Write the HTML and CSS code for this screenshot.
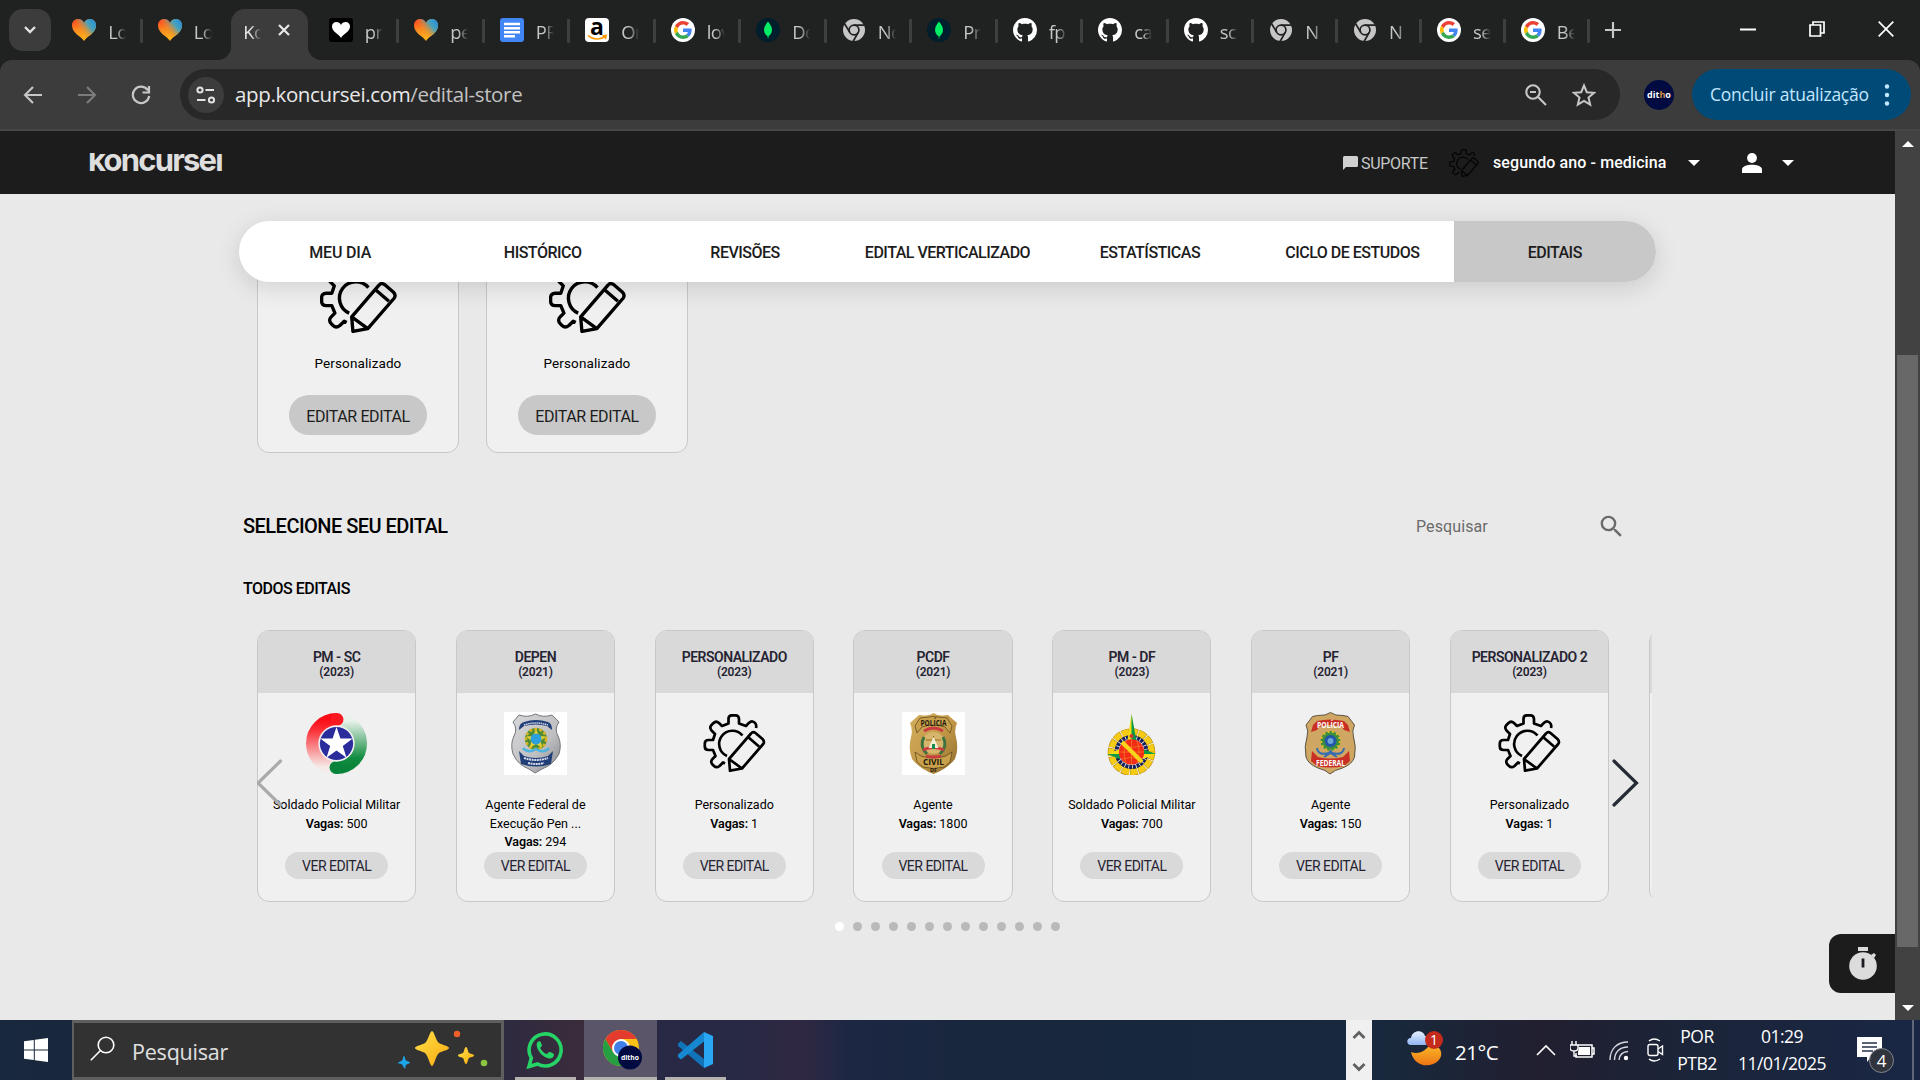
FILE: index.html
```html
<!DOCTYPE html>
<html lang="pt-BR">
<head>
<meta charset="utf-8">
<title>Koncursei</title>
<link rel="stylesheet" href="styles.css">
</head>
<body>
<svg class="defs" width="0" height="0" aria-hidden="true">
  <defs>
    <linearGradient id="heartWarm" x1="0" y1="0" x2="0.3" y2="1"><stop offset="0" stop-color="#ff3b1f"/><stop offset=".5" stop-color="#f98a20"/><stop offset="1" stop-color="#fbb41c"/></linearGradient>
    <linearGradient id="heartCool" x1="1" y1="0.1" x2="0.35" y2="0.55"><stop offset="0" stop-color="#1a8fe0"/><stop offset=".45" stop-color="#4fa3b5"/><stop offset="1" stop-color="#f98a20" stop-opacity="0"/></linearGradient>
    <linearGradient id="redFade" x1="0" y1="0" x2="0" y2="1"><stop offset="0" stop-color="#fb0d17"/><stop offset=".2" stop-color="#fb2a32"/><stop offset="1" stop-color="#f6e9e6"/></linearGradient>
    <linearGradient id="greenFade" x1="0" y1="0" x2="0" y2="1"><stop offset="0" stop-color="#eaf2ec"/><stop offset=".8" stop-color="#128c40"/><stop offset="1" stop-color="#08843a"/></linearGradient>
    <linearGradient id="silver" x1="0" y1="0" x2="1" y2="1"><stop offset="0" stop-color="#d8d8da"/><stop offset=".6" stop-color="#bfbfc2"/><stop offset="1" stop-color="#85868b"/></linearGradient>
    <linearGradient id="gold" x1="0" y1="0" x2="1" y2="1"><stop offset="0" stop-color="#d3ae60"/><stop offset=".5" stop-color="#c49a49"/><stop offset="1" stop-color="#8f6b2c"/></linearGradient>
    <linearGradient id="spark" x1="0" y1="0" x2="1" y2="1"><stop offset="0" stop-color="#ffe04a"/><stop offset="1" stop-color="#f9ab0e"/></linearGradient>
    <linearGradient id="moon" x1="0" y1="0" x2="0" y2="1"><stop offset="0" stop-color="#fbc02d"/><stop offset="1" stop-color="#ee7413"/></linearGradient>
    <linearGradient id="cloud" x1="0" y1="0" x2="0" y2="1"><stop offset="0" stop-color="#e8f1ff"/><stop offset="1" stop-color="#8eb5f2"/></linearGradient>

    <symbol id="heart" viewBox="0 0 24 24"><path d="M12 23C9 18 0 15.500 0 7.500 0 3.200 2.800 1 6 1c2.800 0 5 1.500 6 4 1-2.500 3.200-4 6-4 3.200 0 6 2.200 6 6.500 0 8-9 10.500-12 15.500z" fill="url(#heartWarm)"/><path d="M12 23C9 18 0 15.500 0 7.500 0 3.200 2.800 1 6 1c2.800 0 5 1.500 6 4 1-2.500 3.200-4 6-4 3.200 0 6 2.200 6 6.500 0 8-9 10.500-12 15.500z" fill="url(#heartCool)"/></symbol>
    <symbol id="heart-bw" viewBox="0 0 24 24"><rect width="24" height="24" rx="3" fill="#000"/><path d="M12 20C10 16 3 14 3 8.500 3 5.500 5 4 7.300 4 9.500 4 11.300 5 12 7c.7-2 2.500-3 4.700-3C19 4 21 5.500 21 8.500 21 14 14 16 12 20z" fill="#fff"/></symbol>
    <symbol id="docs" viewBox="0 0 24 24"><rect width="24" height="24" rx="3" fill="#4285f4"/><path d="M4 6h16M4 10.300h16M4 14.300h16M4 18.200h11" stroke="#fff" stroke-width="2.400"/></symbol>
    <symbol id="amazon" viewBox="0 0 24 24"><rect width="24" height="24" rx="4" fill="#fff"/><text x="12" y="16.500" text-anchor="middle" font-family="Open Sans, sans-serif" font-weight="700" font-size="23" fill="#000">a</text><path d="M3 17.500c5 4.500 12.500 4.500 17 1M17.500 17.800l3.600-.3-.7 3.500" fill="none" stroke="#ff9900" stroke-width="1.600"/></symbol>
    <symbol id="google" viewBox="0 0 24 24"><circle cx="12" cy="12" r="12" fill="#fff"/><g transform="translate(3 3) scale(.375)"><path fill="#EA4335" d="M24 9.500c3.540 0 6.710 1.220 9.210 3.600l6.850-6.850C35.900 2.380 30.470 0 24 0 14.620 0 6.510 5.380 2.560 13.220l7.980 6.190C12.430 13.720 17.740 9.500 24 9.500z"/><path fill="#4285F4" d="M46.980 24.550c0-1.570-.15-3.090-.38-4.550H24v9.020h12.940c-.58 2.960-2.260 5.480-4.780 7.180l7.730 6c4.510-4.180 7.090-10.360 7.090-17.650z"/><path fill="#FBBC05" d="M10.530 28.590c-.48-1.450-.76-2.990-.76-4.590s.27-3.140.76-4.590l-7.980-6.190C.92 16.460 0 20.120 0 24c0 3.880.92 7.540 2.560 10.780l7.970-6.190z"/><path fill="#34A853" d="M24 48c6.480 0 11.930-2.130 15.890-5.810l-7.730-6c-2.150 1.450-4.920 2.300-8.160 2.300-6.260 0-11.570-4.220-13.470-9.910l-7.980 6.190C6.510 42.620 14.620 48 24 48z"/></g></symbol>
    <symbol id="mongo" viewBox="0 0 24 24"><circle cx="12" cy="12" r="12" fill="#001e2b"/><path d="M12 3.500c-2 2.500-4 5-4 8.500 0 3 1.800 5 3.600 6.300l.2 2.200h.5l.2-2.200c1.800-1.300 3.500-3.300 3.500-6.300 0-3.500-2-6-4-8.500z" fill="#00ed64"/></symbol>
    <symbol id="chrome-mono" viewBox="0 0 24 24"><circle cx="12" cy="12" r="11" fill="#c6c6c6"/><circle cx="12" cy="12" r="4.900" fill="#c6c6c6" stroke="#202221" stroke-width="1.700"/><path d="M12 7.100h10.500M7.800 14.400 2.600 5.800M16.200 14.400 11.100 23.500" stroke="#202221" stroke-width="1.700"/></symbol>
    <symbol id="github" viewBox="0 0 16 16"><path fill="#fff" d="M8 0C3.580 0 0 3.580 0 8c0 3.540 2.290 6.530 5.470 7.590.4.070.55-.17.55-.38 0-.19-.01-.82-.01-1.490-2.010.37-2.530-.49-2.690-.94-.09-.23-.48-.94-.82-1.130-.28-.15-.68-.52-.01-.53.63-.01 1.080.58 1.230.82.72 1.210 1.870.87 2.330.66.070-.52.28-.87.51-1.070-1.780-.2-3.640-.89-3.640-3.950 0-.87.31-1.590.82-2.150-.08-.2-.36-1.020.08-2.120 0 0 .67-.21 2.200.82.64-.18 1.320-.27 2-.27s1.360.09 2 .27c1.530-1.040 2.200-.82 2.200-.82.44 1.100.16 1.920.08 2.120.51.56.82 1.270.82 2.150 0 3.070-1.870 3.750-3.650 3.950.29.25.54.73.54 1.480 0 1.070-.01 1.930-.01 2.200 0 .21.15.46.55.38A8.010 8.010 0 0 0 16 8c0-4.420-3.580-8-8-8z"/></symbol>
    <symbol id="gear" viewBox="0 0 62 58"><g fill="none" stroke="currentColor" stroke-width="2.700" stroke-linejoin="round"><path d="M52.500 14c1-3.500-1-6-3.500-6.500-2-.4-3.500 1-6.500 4.500l-7-2.500V5c0-2.500-1.500-3.700-3.500-3.700h-3.500c-2 0-3.500 1.200-3.500 3.700v4.500l-6.500 2.500-3-3c-2-1.700-4-1.500-5.500 0l-2 2c-1.500 1.600-1.500 3.600 0 5.500l3.500 3.500-2 6H5c-2.500 0-3.700 1.500-3.700 3.500v3c0 2 1.200 3.500 3.700 3.500h4.500l2.500 6-3 3c-1.800 1.800-1.500 4 0 5.500l1.500 1.500c1.600 1.500 3.600 1.500 5.500 0l3.500-3.500 2 1"/><path d="M39 21.500A13.200 13.200 0 1 0 23.500 42"/><path d="M25.500 45 47.500 19.500q2-2.500 4.500-.5l7 6q2.500 2.500.7 5L38.500 54.500 26.500 56.700ZM44.500 23l11 9.500M25.500 45l13 9.500"/></g></symbol>
    <symbol id="search" viewBox="0 0 24 24"><path fill="currentColor" d="M15.500 14h-.79l-.28-.27A6.470 6.470 0 0 0 16 9.500 6.500 6.500 0 1 0 9.500 16c1.610 0 3.090-.59 4.230-1.570l.27.28v.79l5 4.990L20.490 19l-4.990-5zm-6 0C7.010 14 5 11.990 5 9.500S7.010 5 9.500 5 14 7.010 14 9.500 11.990 14 9.500 14z"/></symbol>
  </defs>
</svg>

<header class="tabstrip">
  <div class="tab-search"><svg width="14" height="10" viewBox="0 0 14 10"><path d="M2 2l5 5 5-5" fill="none" stroke="#e3e3e3" stroke-width="2.400"/></svg></div>
  <div class="tabs">
    <div class="tab"><svg class="fav"><use href="#heart"/></svg><span>Lo</span></div>
    <div class="tab nosep"><svg class="fav"><use href="#heart"/></svg><span>Lo</span></div>
    <div class="tab active"><span>Ko</span><svg width="14" height="14" viewBox="0 0 14 14"><path d="M2 2l10 10M12 2 2 12" stroke="#e8e8e8" stroke-width="2.200"/></svg></div>
    <div class="tab"><svg class="fav"><use href="#heart-bw"/></svg><span>pr</span></div>
    <div class="tab"><svg class="fav"><use href="#heart"/></svg><span>pe</span></div>
    <div class="tab"><svg class="fav"><use href="#docs"/></svg><span>PR</span></div>
    <div class="tab"><svg class="fav"><use href="#amazon"/></svg><span>On</span></div>
    <div class="tab"><svg class="fav"><use href="#google"/></svg><span>lov</span></div>
    <div class="tab"><svg class="fav"><use href="#mongo"/></svg><span>Do</span></div>
    <div class="tab"><svg class="fav"><use href="#chrome-mono"/></svg><span>No</span></div>
    <div class="tab"><svg class="fav"><use href="#mongo"/></svg><span>Pr</span></div>
    <div class="tab"><svg class="fav"><use href="#github"/></svg><span>fp</span></div>
    <div class="tab"><svg class="fav"><use href="#github"/></svg><span>ca</span></div>
    <div class="tab"><svg class="fav"><use href="#github"/></svg><span>sc</span></div>
    <div class="tab slim"><svg class="fav"><use href="#chrome-mono"/></svg><span>N</span></div>
    <div class="tab slim"><svg class="fav"><use href="#chrome-mono"/></svg><span>N</span></div>
    <div class="tab slim"><svg class="fav"><use href="#google"/></svg><span>se</span></div>
    <div class="tab slim"><svg class="fav"><use href="#google"/></svg><span>Be</span></div>
  </div>
  <svg class="new-tab" width="16" height="16" viewBox="0 0 16 16"><path d="M8 0v16M0 8h16" stroke="#c7c7c7" stroke-width="2.200"/></svg>
  <div class="window-controls">
    <svg width="16" height="16" viewBox="0 0 16 16"><path d="M0 8.500h16" stroke="#fff" stroke-width="2"/></svg>
    <svg width="16" height="16" viewBox="0 0 16 16"><path d="M1 4h10.500v11H1zM4 4V1h11v11h-3.500" fill="none" stroke="#fff" stroke-width="1.700"/></svg>
    <svg width="16" height="16" viewBox="0 0 16 16"><path d="M.7.700l14.600 14.600M15.300.700.700 15.300" stroke="#fff" stroke-width="1.700"/></svg>
  </div>
</header>

<div class="toolbar">
  <div class="nav-buttons">
    <svg width="20" height="20" viewBox="0 0 20 20"><path d="M19 10H2M10 2l-8 8 8 8" fill="none" stroke="#c7c7c7" stroke-width="2.100"/></svg>
    <svg width="20" height="20" viewBox="0 0 20 20"><path d="M1 10h17M10 2l8 8-8 8" fill="none" stroke="#7c7c7c" stroke-width="2.100"/></svg>
    <svg width="20" height="20" viewBox="0 0 20 20"><path d="M17 5.500A8.200 8.200 0 1 0 18.200 11M18 1v6.500h-6.500" fill="none" stroke="#c7c7c7" stroke-width="2.200"/></svg>
  </div>
  <div class="omnibox">
    <div class="site-info"><svg width="20" height="20" viewBox="0 0 20 20"><g fill="none" stroke="#e3e3e3" stroke-width="2"><circle cx="4" cy="5" r="2.600"/><path d="M9.500 5H18M1 15h8.500"/><circle cx="15.500" cy="15" r="2.600"/></g></svg></div>
    <div class="url">app.koncursei.com<span>/edital-store</span></div>
    <svg width="22" height="22" viewBox="0 0 22 22"><g fill="none" stroke="#c7c7c7" stroke-width="2.100"><circle cx="8" cy="8" r="6.700"/><path d="M12.800 12.800 21 21M5 8h6"/></g></svg>
    <svg class="star" width="24" height="24" viewBox="0 0 24 24"><path d="M12 2.500l2.800 6.700 7.200.6-5.500 4.700 1.700 7.100L12 17.800l-6.200 3.800 1.700-7.100L2 9.800l7.200-.6z" fill="none" stroke="#c7c7c7" stroke-width="2"/></svg>
  </div>
  <div class="avatar">dit<i>h</i>o</div>
  <div class="update"><span>Concluir atualização</span><svg width="6" height="22" viewBox="0 0 6 22"><g fill="#c2e7ff"><circle cx="3" cy="2.500" r="2.200"/><circle cx="3" cy="11" r="2.200"/><circle cx="3" cy="19.500" r="2.200"/></g></svg></div>
</div>

<div class="viewport">
  <div class="page">
    <div class="appbar">
      <div class="logo"><span>koncursei</span></div>
      <div class="support"><svg width="15" height="14" viewBox="0 0 15 14"><path d="M1.500 0h12Q15 0 15 1.500v8Q15 11 13.500 11H3l-3 3V1.500Q0 0 1.500 0z" fill="#d0d0d0"/></svg><span>SUPORTE</span></div>
      <svg class="plan-icon" width="30" height="28"><use href="#gear"/></svg>
      <div class="plan">segundo ano - medicina</div>
      <i class="caret"></i>
      <svg class="user" width="20" height="20" viewBox="0 0 20 20"><circle cx="10" cy="5" r="4.900" fill="#fff"/><path d="M0 20v-3.500C0 13 6 11.800 10 11.800S20 13 20 16.500V20z" fill="#fff"/></svg>
      <i class="caret"></i>
    </div>

    <nav class="menu">
      <a>MEU DIA</a><a>HISTÓRICO</a><a>REVISÕES</a><a>EDITAL VERTICALIZADO</a><a>ESTATÍSTICAS</a><a>CICLO DE ESTUDOS</a><a class="on">EDITAIS</a>
    </nav>

    <main>
      <section class="mine">
        <article><svg width="77" height="72"><use href="#gear"/></svg><p>Personalizado</p><button>EDITAR EDITAL</button></article>
        <article><svg width="77" height="72"><use href="#gear"/></svg><p>Personalizado</p><button>EDITAR EDITAL</button></article>
      </section>

      <div class="heading">
        <h1>SELECIONE SEU EDITAL</h1>
        <div class="search"><span>Pesquisar</span><svg width="29" height="29"><use href="#search"/></svg></div>
      </div>
      <h2>TODOS EDITAIS</h2>

      <section class="carousel">
        <article>
          <header><b>PM - SC</b><small>(2023)</small></header>
          <svg class="badge" viewBox="0 0 63 63"><path d="M32 7.500A24 24 0 0 0 7.500 31.500A24 24 0 0 0 25 54.600" fill="none" stroke="url(#redFade)" stroke-width="13"/><path d="M31 55.500A24 24 0 0 0 55.500 31.500A24 24 0 0 0 38 8.400" fill="none" stroke="url(#greenFade)" stroke-width="13"/><circle cx="32" cy="7.500" r="6.500" fill="#fb1820"/><circle cx="31" cy="55.500" r="6.500" fill="#08843a"/><circle cx="31.500" cy="31.500" r="18.200" fill="#f0f0f0"/><circle cx="31.500" cy="31.500" r="16.600" fill="#2b2c9c"/><path d="M31.500 15l3.900 11.600h12.300l-9.900 7.300 3.700 11.800-10-7.200-10 7.200 3.700-11.800-9.900-7.300h12.300z" fill="#fff"/></svg>
          <div class="info">Soldado Policial Militar<br><b>Vagas:</b> 500</div><button>VER EDITAL</button>
        </article>
        <article>
          <header><b>DEPEN</b><small>(2021)</small></header>
          <svg class="badge" viewBox="0 0 63 63"><rect width="63" height="63" fill="#fff"/><path d="M15 3Q24 6 31.500 2 39 6 48 3l7 7q-5 7-1 14 4 8 1 18-6 11-17 15l-7 4-6-4Q14 53 9 42q-3-10 1-18 4-7-1-14z" fill="url(#silver)" stroke="#74757a"/><path d="M15 18q0-7 5-8 12-4 24 0 4 1 4 8l-5-4q-11-3-23 0z" fill="#213e79"/><path d="M20 13q12-4 24 0" fill="none" stroke="#cfd6e6" stroke-width="1.500" stroke-dasharray="1.500 .6"/><circle cx="32" cy="27" r="11" fill="#4d8b35"/><circle cx="32" cy="27" r="10" fill="none" stroke="#d8b322" stroke-width="2.500" stroke-dasharray="3 2"/><path d="M32 17l3 7 7 .5-5.500 4.500 2 7-6.500-4-6.500 4 2-7-5.500-4.500 7-.5z" fill="#e9cf30"/><circle cx="32" cy="27" r="5.500" fill="#2c9fdd"/><path d="M19 36q5 6 13 1 8 5 13-1" fill="none" stroke="#4eb4de" stroke-width="2.500"/><path d="M15 39l5 5q12 4 24 0l5-5-2 13q-15 5-30 0z" fill="#213e79"/><path d="M20 46q12 4 24 0M24 51q8 2 16 0" fill="none" stroke="#d5dceb" stroke-width="2" stroke-dasharray="2 .6"/></svg>
          <div class="info">Agente Federal de<br>Execução Pen ...<br><b>Vagas:</b> 294</div><button>VER EDITAL</button>
        </article>
        <article>
          <header><b>PERSONALIZADO</b><small>(2023)</small></header>
          <svg class="badge gear"><use href="#gear"/></svg>
          <div class="info">Personalizado<br><b>Vagas:</b> 1</div><button>VER EDITAL</button>
        </article>
        <article>
          <header><b>PCDF</b><small>(2021)</small></header>
          <svg class="badge" viewBox="0 0 63 63"><rect width="63" height="63" fill="#fff"/><path d="M31.500 1Q36 4 41 3.500L46 3 55 11q-3 7-1 14 3 12-1 22-8 10-21.500 15Q18 57 10 47q-4-10-1-22 2-7-1-14l9-8 5 .5Q27 4 31.500 1z" fill="url(#gold)"/><path d="M13 14l5-8q13-3 27 0l5 8-2 7-5-6q-12-4-23 0l-5 6zM13 40l6 4q12 4 25 0l6-4-2 10-6 5q-11 3-21 0l-6-5z" fill="#c9a14c" stroke="#564118" stroke-width=".7"/><text x="31.500" y="13.500" text-anchor="middle" textLength="26" lengthAdjust="spacingAndGlyphs" class="crest dark">POLÍCIA</text><circle cx="31.500" cy="31" r="11" fill="#d5b66c"/><path d="M22 25q-5 9 3 17M41 25q5 9-3 17" fill="none" stroke="#3e7240" stroke-width="3"/><path d="M22 19q9.500-6 19 0M21 38q10-5 21 0M24 44q8 2 15 0" fill="none" stroke="#cc3b40" stroke-width="2.800"/><path d="M24 28h15M31.500 24v12" stroke="#99681e"/><path d="M31.500 25l5 11h-10z" fill="#f0eed6"/><path d="M30 32h3v5h-3z" fill="#168b4a"/><text x="31.500" y="53" text-anchor="middle" textLength="21" lengthAdjust="spacingAndGlyphs" class="crest dark">CIVIL</text><text x="31.500" y="59.500" text-anchor="middle" class="crest dark tiny">DF</text></svg>
          <div class="info">Agente<br><b>Vagas:</b> 1800</div><button>VER EDITAL</button>
        </article>
        <article>
          <header><b>PM - DF</b><small>(2023)</small></header>
          <svg class="badge" viewBox="0 0 63 63"><circle cx="31.500" cy="40" r="20" fill="none" stroke="#b98d17" stroke-width="7.500" stroke-dasharray="7.500 .9"/><circle cx="31.500" cy="40" r="20" fill="none" stroke="#f6cb13" stroke-width="6.200" stroke-dasharray="7 1.400"/><circle cx="31.500" cy="40" r="16" fill="#f0f0f0"/><circle cx="31.500" cy="40" r="15" fill="none" stroke="#16235f" stroke-width="4" stroke-dasharray="3 .8"/><path d="M31.500 2l4 26h-8z" fill="#f5dd16"/><path d="M31.500 2l5 27h-5z" fill="#0b9b46"/><path d="M7 42l13-5 1 5z" fill="#f5dd16"/><path d="M7 42h14l-1 5z" fill="#0b9b46"/><path d="M56 42l-13-5-1 5z" fill="#0b9b46"/><path d="M56 42H42l1 5z" fill="#f5dd16"/><circle cx="31.500" cy="40" r="12.700" fill="#f32c17"/><path d="M19 40h25M31.500 28v25M22 34q9 3 19 0M22 47q9-3 19 0M26 29q-4 11 0 22M37 29q4 11 0 22" fill="none" stroke="#f2a32a" stroke-width=".5"/><path d="M22 30l20 20" stroke="#f8d51a" stroke-width="4"/><circle cx="31.500" cy="24" r="2" fill="#d9352a"/></svg>
          <div class="info">Soldado Policial Militar<br><b>Vagas:</b> 700</div><button>VER EDITAL</button>
        </article>
        <article>
          <header><b>PF</b><small>(2021)</small></header>
          <svg class="badge" viewBox="0 0 63 63"><path d="M31.500.500Q36 4 44 3.500l5 1 6.500 8.500q-3 6-1 12 3 9 1 20-2 7-12 11-8 2-12.500 6Q27 58 19 56 9 52 7 45q-2-11 1-20 2-6-1-12L13.500 4.500l5-1Q27 4 31.500.500z" fill="#cfa662" stroke="#5b5344"/><path d="M12 20l2-7 4-4q13-3 27 0l4 4 2 7-6-2-2-3q-12-4-23 0l-2 3z" fill="#c92f24"/><text x="31.500" y="15.500" text-anchor="middle" textLength="27" lengthAdjust="spacingAndGlyphs" class="crest light">POLÍCIA</text><circle cx="31.500" cy="29" r="10" fill="#3a8e3e"/><circle cx="31.500" cy="29" r="9.300" fill="none" stroke="#e1bd25" stroke-width="2" stroke-dasharray="2 2.500"/><circle cx="31.500" cy="29" r="6" fill="#2356a8"/><circle cx="31.500" cy="29" r="3" fill="#6ca5d8"/><path d="M18 36q1 8 12 5l1.500-2 1.500 2q11 3 12-5M25 45l6.500-4 6.500 4" fill="none" stroke="#356db1" stroke-width="2"/><path d="M13 39l6 6q12 3 25 0l6-6 1 10-6 5q-14 3-27 0l-6-5z" fill="#c92f24"/><text x="31.500" y="54" text-anchor="middle" textLength="29" lengthAdjust="spacingAndGlyphs" class="crest light">FEDERAL</text></svg>
          <div class="info">Agente<br><b>Vagas:</b> 150</div><button>VER EDITAL</button>
        </article>
        <article>
          <header><b>PERSONALIZADO 2</b><small>(2023)</small></header>
          <svg class="badge gear"><use href="#gear"/></svg>
          <div class="info">Personalizado<br><b>Vagas:</b> 1</div><button>VER EDITAL</button>
        </article>
        <article><header></header></article>
        <svg class="arrow prev" width="28" height="50" viewBox="0 0 28 50"><path d="M24.500 3 2 25 24.500 47" fill="none" stroke="#a9aaab" stroke-width="3.200" stroke-linecap="round"/></svg>
        <svg class="arrow next" width="28" height="50" viewBox="0 0 28 50"><path d="M3 3l22.500 22L3 47" fill="none" stroke="#262b33" stroke-width="3.200" stroke-linecap="round"/></svg>
      </section>
      <div class="dots"><i class="on"></i><i></i><i></i><i></i><i></i><i></i><i></i><i></i><i></i><i></i><i></i><i></i><i></i></div>
    </main>
    <div class="timer"><svg width="30" height="34" viewBox="0 0 30 34"><path d="M10 0h10v4H10z" fill="#dcdcdc"/><circle cx="15" cy="19" r="13.800" fill="#dcdcdc"/><path d="M23 8l3-2 2 2-2 3z" fill="#dcdcdc"/><path d="M15 11.500v9" stroke="#1b1b24" stroke-width="2.800"/></svg></div>
  </div>
  <div class="scrollbar"><i class="up"></i><div class="thumb"></div><i class="down"></i></div>
</div>

<footer class="taskbar">
  <div class="start"><svg width="24" height="24" viewBox="0 0 24 24"><path d="M0 3.300 9.800 2v9.400H0zM10.800 1.800 24 0v11.400H10.800zM0 12.500h9.800V22L0 20.700zM10.800 12.500H24V24l-13.200-1.800z" fill="#fff"/></svg></div>
  <div class="task-search">
    <svg width="25" height="25" viewBox="0 0 25 25"><g fill="none" stroke="#fff" stroke-width="1.600"><circle cx="16" cy="9" r="7.800"/><path d="M10.500 14.500.800 24.200"/></g></svg>
    <span>Pesquisar</span>
    <svg class="sparkles" width="94" height="40" viewBox="0 0 94 40"><path d="M36 2c2 0 4 10 7 12s10 3 10 5-7 3-10 5-5 13-7 13-4-11-7-13-10-3-10-5 7-3 10-5 5-12 7-12z" fill="url(#spark)"/><path d="M70 18c1.500 0 2 5 3 6s5 1 5 2.500-4 1.500-5 2.500-1.500 6-3 6-2-5-3-6-5-1-5-2.500 4-1.500 5-2.500 1.500-6 3-6z" fill="url(#spark)"/><path d="M8 27c1 0 1 3.500 2 4.500s4 1 4 2-3 1.500-4 2.500 0 3.500-1 3.500-2-3-3-4-4-.5-4-1.500 3-1.500 4-2.500 1-4.500 2-4.500z" fill="#1ba5e8"/><circle cx="61" cy="5" r="3.200" fill="#f1602b"/><circle cx="88" cy="34" r="3.300" fill="#8cc63e"/></svg>
  </div>
  <div class="app wa"><svg width="38" height="38" viewBox="0 0 38 38"><path d="M3 35.500l2.300-8.500A16 16 0 1 1 11.500 33z" fill="none" stroke="#25d366" stroke-width="3.600"/><path d="M13 10c-2 1-3 3-2 6 2 6 6 10 12 11.500 2.500.5 5-1 5-4 0-1-4-3-5-2.500s-1.500 2.200-2.500 2C17.500 22 15 19 14.300 17.300c-.3-.9 1.600-1.800 1.700-2.800S14.500 9.800 13 10z" fill="#25d366"/></svg></div>
  <div class="app ch"><svg width="42" height="42" viewBox="0 0 42 42"><circle cx="19" cy="19" r="18" fill="#fbc116"/><path d="M3.400 10A18 18 0 0 1 34.600 10H19L11.500 24z" fill="#e33b2e"/><path d="M3.400 10A18 18 0 0 0 19 37l7.800-13.500-15.300.5z" fill="#269f42"/><circle cx="19" cy="19" r="9" fill="#fff"/><circle cx="19" cy="19" r="7" fill="#3f7fe8"/><circle cx="28" cy="28.500" r="12" fill="#020a42"/><text x="28" y="31" text-anchor="middle" textLength="18" lengthAdjust="spacingAndGlyphs" class="mini">ditho</text></svg></div>
  <div class="app vs"><svg width="36" height="36" viewBox="0 0 36 36"><path d="M1 11.500 4 9l23 18v9L1 14z" fill="#1173b8"/><path d="M27 0v9.500L4 27.500 1 25v-2.500z" fill="#1588d1"/><path d="M27 0l9 4v28l-9 4z" fill="#29a7f2"/></svg></div>
  <div class="spacer"></div>
  <div class="toolbar-scroll"><svg width="14" height="9" viewBox="0 0 14 9"><path d="M1.500 8 7 2.500 12.500 8" fill="none" stroke="#606060" stroke-width="2.800"/></svg><svg width="14" height="9" viewBox="0 0 14 9"><path d="M1.500 1 7 6.500 12.500 1" fill="none" stroke="#606060" stroke-width="2.800"/></svg></div>
  <svg class="weather" width="38" height="36" viewBox="0 0 38 36"><path d="M4 21c8 3 17-2 19-9 12 3 14 12 8 18-9 8-24 5-27-9z" fill="url(#moon)"/><path d="M4 14c-5 0-5-7 0-7C5-1 16-2 18 5c5 0 6 9 0 9z" fill="url(#cloud)"/><circle cx="27" cy="9" r="9" fill="#c42b1c"/><text x="27" y="14" text-anchor="middle" class="count">1</text></svg>
  <span class="temp">21°C</span>
  <svg class="t-up" width="20" height="12" viewBox="0 0 20 12"><path d="M1 11l9-9 9 9" fill="none" stroke="#fff" stroke-width="1.600"/></svg>
  <svg class="t-bat" width="25" height="18" viewBox="0 0 25 18"><path d="M8 4h14v12H6v-4M22 7h2v6h-2" fill="none" stroke="#fff" stroke-width="1.500"/><path d="M9 6h11v8H8v-3z" fill="#fff"/><path d="M2 0v4M6 0v4M0 4h8v3q0 3-4 3t-4-3zM4 10v5h3" fill="none" stroke="#fff" stroke-width="1.400"/></svg>
  <svg class="t-wifi" width="20" height="20" viewBox="0 0 20 20"><g fill="none" stroke="#d5d9df" stroke-width="1.400"><path d="M1 19C1 8 8 1 19 1M5.500 19C5.500 11 11 6 19 6M10 19c0-5 4-8.500 9-8.500"/></g><circle cx="17" cy="17" r="2.200" fill="#fff"/></svg>
  <svg class="t-cam" width="17" height="24" viewBox="0 0 17 24"><g fill="none" stroke="#fff" stroke-width="1.400"><rect x="1" y="6.500" width="10" height="11" rx="2"/><path d="M11 11l4.500-3v8.500L11 13.500M2 3q5-4 11 0M2 21q5 4 11 0"/></g></svg>
  <div class="stack lang"><span>POR</span><span>PTB2</span></div>
  <div class="stack clock"><span>01:29</span><span>11/01/2025</span></div>
  <svg class="notif" width="38" height="38" viewBox="0 0 38 38"><path d="M0 0h25v20H14l-4 5v-5H0z" fill="#fff"/><path d="M5 6h15M5 10h15M5 14h11" stroke="#26304a" stroke-width="1.400"/><circle cx="24.500" cy="23.500" r="12" fill="#30343c" stroke="#80848c"/><text x="24.500" y="29.500" text-anchor="middle" class="four">4</text></svg>
  <i class="peek"></i>
</footer>
</body>
</html>
```
FILE: styles.css
```css
* { box-sizing: border-box; }
body { margin: 0; width: 1920px; height: 1080px; overflow: hidden; display: flex; flex-direction: column; background: #202221; font-family: "Open Sans", "Noto Sans", sans-serif; }
svg { display: block; flex: none; }
.defs { position: absolute; }

.tabstrip { height: 60px; display: flex; align-items: flex-start; background: #202221; padding-left: 9px; flex: none; }
.tab-search { width: 42px; height: 42px; margin-top: 9px; border-radius: 14px; background: #3c3c3c; display: grid; place-items: center; }
.tabs { display: flex; margin-left: 6.200px; }
.tab { width: 85.500px; height: 60px; display: flex; align-items: center; padding-left: 15px; position: relative; color: #c7c7c7; font-size: 18.500px; }
.tab.slim { width: 83.900px; }
.fav { width: 24px; height: 24px; }
.tab span { width: 27px; margin: 2px 0 0 12px; white-space: nowrap; letter-spacing: -.6px; -webkit-mask-image: linear-gradient(90deg, #000 8px, transparent 18px); mask-image: linear-gradient(90deg, #000 8px, transparent 18px); }
.tab::after { content: ""; position: absolute; right: 0; top: 19px; width: 3px; height: 24px; border-radius: 1px; background: #3e3f3f; }
.tab.nosep::after { display: none; }
.tab.active { color: #e8e8e8; z-index: 1; }
.tab.active span { margin-left: 0; margin-right: 7px; z-index: 1; }
.tab.active svg { z-index: 1; }
.tab.active::before { content: ""; position: absolute; left: 3px; top: 9px; width: 77px; height: 51px; border-radius: 14px 14px 0 0; background: #3c3c3c; }
.tab.active::after { left: -11px; right: -8px; width: auto; top: 46px; height: 14px; border-radius: 0; background: radial-gradient(circle at 0 0, transparent 14px, #3c3c3c 14.500px) left/14px 14px no-repeat, radial-gradient(circle at 100% 0, transparent 14px, #3c3c3c 14.500px) right/14px 14px no-repeat; }
.new-tab { margin: 22px 0 0 15.500px; }
.window-controls { display: flex; gap: 53px; margin: 21px 26px 0 auto; }

.toolbar { height: 71px; flex: none; display: flex; align-items: center; background: #3c3c3c; border-radius: 12px 12px 0 0; border-bottom: 2px solid #474747; padding: 0 9px 0 23px; }
.nav-buttons { display: flex; gap: 34px; width: 157px; }
.omnibox { width: 1440px; height: 51px; border-radius: 26px; background: #282828; display: flex; align-items: center; padding: 0 24px 0 8px; }
.site-info { width: 36px; height: 36px; border-radius: 50%; background: #3c3c3c; display: grid; place-items: center; }
.url { flex: 1; margin: -2px 0 0 11px; color: #e8e8e8; font-size: 20.500px; letter-spacing: -.35px; }
.url span { color: #c2c2c2; }
.star { margin-left: 25px; }
.avatar { width: 30px; height: 30px; margin: 0 18px 0 24px; border-radius: 50%; background: #020a42; color: #fff; font: 700 9px/29px "Open Sans", sans-serif; text-align: center; }
.avatar i { font-style: normal; color: #d68b3c; }
.update { width: 219px; height: 51px; border-radius: 26px; background: #004a77; color: #c2e7ff; display: flex; align-items: center; padding-left: 18px; font-size: 17.500px; letter-spacing: -.25px; white-space: nowrap; }
.update span { width: 174px; margin-top: -2px; }

.viewport { height: 889px; display: flex; flex: none; }
.page { width: 1895px; background: #e9e9e9; position: relative; font-family: Roboto, "Noto Sans", sans-serif; }
.appbar { height: 63px; background: #1c1c1c; color: #fff; display: flex; align-items: center; padding-left: 88px; }
.logo { width: 135px; height: 18px; overflow: hidden; color: #dedede; margin-top: -1px; }
.logo span { display: block; font: 700 31px/30px Inter, sans-serif; letter-spacing: -1.800px; margin-top: -8px; }
.support { display: flex; align-items: center; gap: 3px; margin-left: 1120px; color: #c8c8c8; font-size: 16px; letter-spacing: -.3px; width: 106px; }
.support span { margin-top: 1px; }
.plan-icon { color: #050505; }
.plan { margin-left: 14px; width: 195px; font-size: 16px; font-weight: 500; letter-spacing: .1px; }
.caret { border: 6px solid transparent; border-top-color: #fff; border-bottom: 0; }
.user { margin: 0 20px 0 42px; }

.menu { width: 1417px; height: 61px; margin: 27px 0 0 239px; border-radius: 31px; background: #fff; overflow: hidden; display: grid; grid-template-columns: repeat(7, 1fr); position: relative; z-index: 2; box-shadow: 0 6px 24px rgba(0, 0, 0, .13); }
.menu a { display: grid; place-items: center; padding-top: 1px; font-size: 16px; font-weight: 500; color: #1c1c1c; letter-spacing: -.5px; }
.menu a:first-child { letter-spacing: -.2px; }
.menu .on { background: #c8c8c8; }

main { width: 1417px; margin-left: 239px; }
button { border: 0; font-family: inherit; padding: 0; }
.mine { display: flex; gap: 27px; margin: -50px 0 0 18px; }
.mine article { width: 202px; height: 221px; border: 1px solid #c8c8c8; border-radius: 12px; background: #f0f0f0; display: flex; flex-direction: column; align-items: center; padding-top: 28px; }
.mine p { margin: 20px 0 22px; font-size: 13.500px; line-height: 20px; letter-spacing: .1px; }
.mine button { width: 138px; height: 40px; border-radius: 20px; background: #c8c8c8; font-size: 16px; color: #1c1c1c; letter-spacing: -.4px; padding-top: 2px; }
.heading { display: flex; justify-content: space-between; align-items: center; height: 46px; margin-top: 50px; padding: 0 30px 0 4px; }
h1 { margin: 0; font-size: 20px; font-weight: 500; letter-spacing: -.53px; }
.search { width: 210px; display: flex; align-items: center; justify-content: space-between; font-size: 16px; color: #6b6b6b; letter-spacing: .1px; }
h2 { margin: 28px 0 0 4px; font-size: 16px; line-height: 24px; font-weight: 500; letter-spacing: -.5px; }
.carousel { display: flex; gap: 39.500px; margin: 29px 0 0 18px; width: 1395px; height: 272px; overflow: hidden; position: relative; }
.carousel article { width: 159.300px; height: 272px; flex: none; border: 1px solid #c8c8c8; border-radius: 12px; background: #f0f0f0; overflow: hidden; display: flex; flex-direction: column; align-items: center; }
.carousel header { align-self: stretch; height: 62px; flex: none; background: #d9d9d9; text-align: center; display: flex; flex-direction: column; padding-top: 18px; color: #262433; }
.carousel header b { font-size: 14px; font-weight: 600; line-height: 16px; letter-spacing: -.5px; }
.carousel header small { font-size: 12px; font-weight: 600; line-height: 15px; letter-spacing: -.2px; }
.badge { width: 63px; height: 63px; margin-top: 19px; }
.badge.gear { height: 58px; margin: 21px 0 3px; }
.info { height: 74px; padding-top: 21px; text-align: center; font-size: 12.500px; line-height: 18.500px; white-space: nowrap; }
.info b { font-weight: 600; letter-spacing: -.1px; }
.carousel button { width: 103px; height: 27px; margin-top: 3px; border-radius: 14px; background: #d9d9d9; font-size: 14px; letter-spacing: -.5px; color: #262433; flex: none; }
.crest { font: 700 8px "Open Sans", sans-serif; }
.dark { fill: #1e190d; }
.light { fill: #fff; }
.tiny { font-size: 5.500px; }
.arrow { position: absolute; top: 128px; }
.prev { left: -1px; }
.next { left: 1354px; }
.dots { display: flex; gap: 9px; margin: 20px 0 0 596px; }
.dots i { width: 9px; height: 9px; border-radius: 50%; background: #b9b9b9; }
.dots .on { background: #fff; }
.timer { position: absolute; right: 0; top: 803px; width: 66px; height: 59px; border-radius: 12px 0 0 12px; background: #1c1c1c; padding: 13px 0 0 19px; }
.scrollbar { width: 25px; background: #424242; display: flex; flex-direction: column; align-items: center; }
.scrollbar i { border: 6px solid transparent; }
.scrollbar .up { border-bottom-color: #fff; border-top: 0; margin-top: 10px; }
.scrollbar .down { border-top-color: #fff; border-bottom: 0; margin-top: 58px; }
.thumb { width: 21px; height: 592px; margin-top: 208px; background: #686868; }

.taskbar { height: 60px; flex: none; display: flex; align-items: center; color: #fff; background: linear-gradient(90deg, #18283d 0, #19273c 70px, #2b2843 500px, #272945 740px, #302842 800px, #1c2743 850px, #18273c 1000px, #18293d 1380px, #211f30 1540px, #1b2438 1680px, #1a2744 1900px); }
.start { width: 72px; padding-left: 24px; }
.task-search { width: 432px; height: 60px; border: 3px solid #5f5f5f; border-left-width: 2px; background: #323232; display: flex; align-items: center; padding-left: 16px; color: #e0e0e0; font-size: 21.500px; }
.task-search > svg:first-child { margin-top: -3px; }
.task-search span { margin: 2px 0 0 17px; width: 97px; letter-spacing: -.2px; }
.sparkles { margin: -2px 0 0 167px; }
.app { height: 60px; display: grid; place-items: center; position: relative; }
.app::after { content: ""; position: absolute; bottom: 0; height: 3px; left: 11px; right: 8px; background: #b6b2b0; }
.wa { width: 80px; background: linear-gradient(90deg, #2e2a40, #3b2c3b); padding-left: 2px; }
.ch { width: 73px; background: #5a5568; padding-left: 4px; }
.ch::after { left: 0; right: 0; }
.vs { width: 77px; padding-right: 2px; }
.vs::after { left: 8px; }
.mini { font: 700 7px "Open Sans", sans-serif; fill: #fff; }
.spacer { width: 612px; }
.toolbar-scroll { width: 26px; height: 60px; background: #f0f0f0; display: flex; flex-direction: column; align-items: center; justify-content: space-between; padding: 10px 0 8px; }
.weather { margin-left: 35px; margin-top: -3px; }
.count { font: 14px "Open Sans", sans-serif; fill: #fff; }
.temp { margin: 3px 0 0 10px; width: 44px; font-size: 20.500px; letter-spacing: -.5px; white-space: nowrap; }
.t-up { margin-left: 37px; }
.t-bat { margin-left: 14px; }
.t-wifi { margin: 2px 0 0 14px; }
.t-cam { margin-left: 18px; }
.stack { display: flex; flex-direction: column; align-items: center; font-size: 17.500px; line-height: 27px; letter-spacing: -.5px; white-space: nowrap; padding-bottom: 1px; }
.lang { width: 40px; margin-left: 13px; }
.clock { width: 94px; margin-left: 18px; }
.notif { margin: 12px 0 0 28px; }
.four { font: 17px "Open Sans", sans-serif; fill: #fff; }
.peek { width: 2px; height: 60px; margin-left: 17px; background: #5f6778; }
```
